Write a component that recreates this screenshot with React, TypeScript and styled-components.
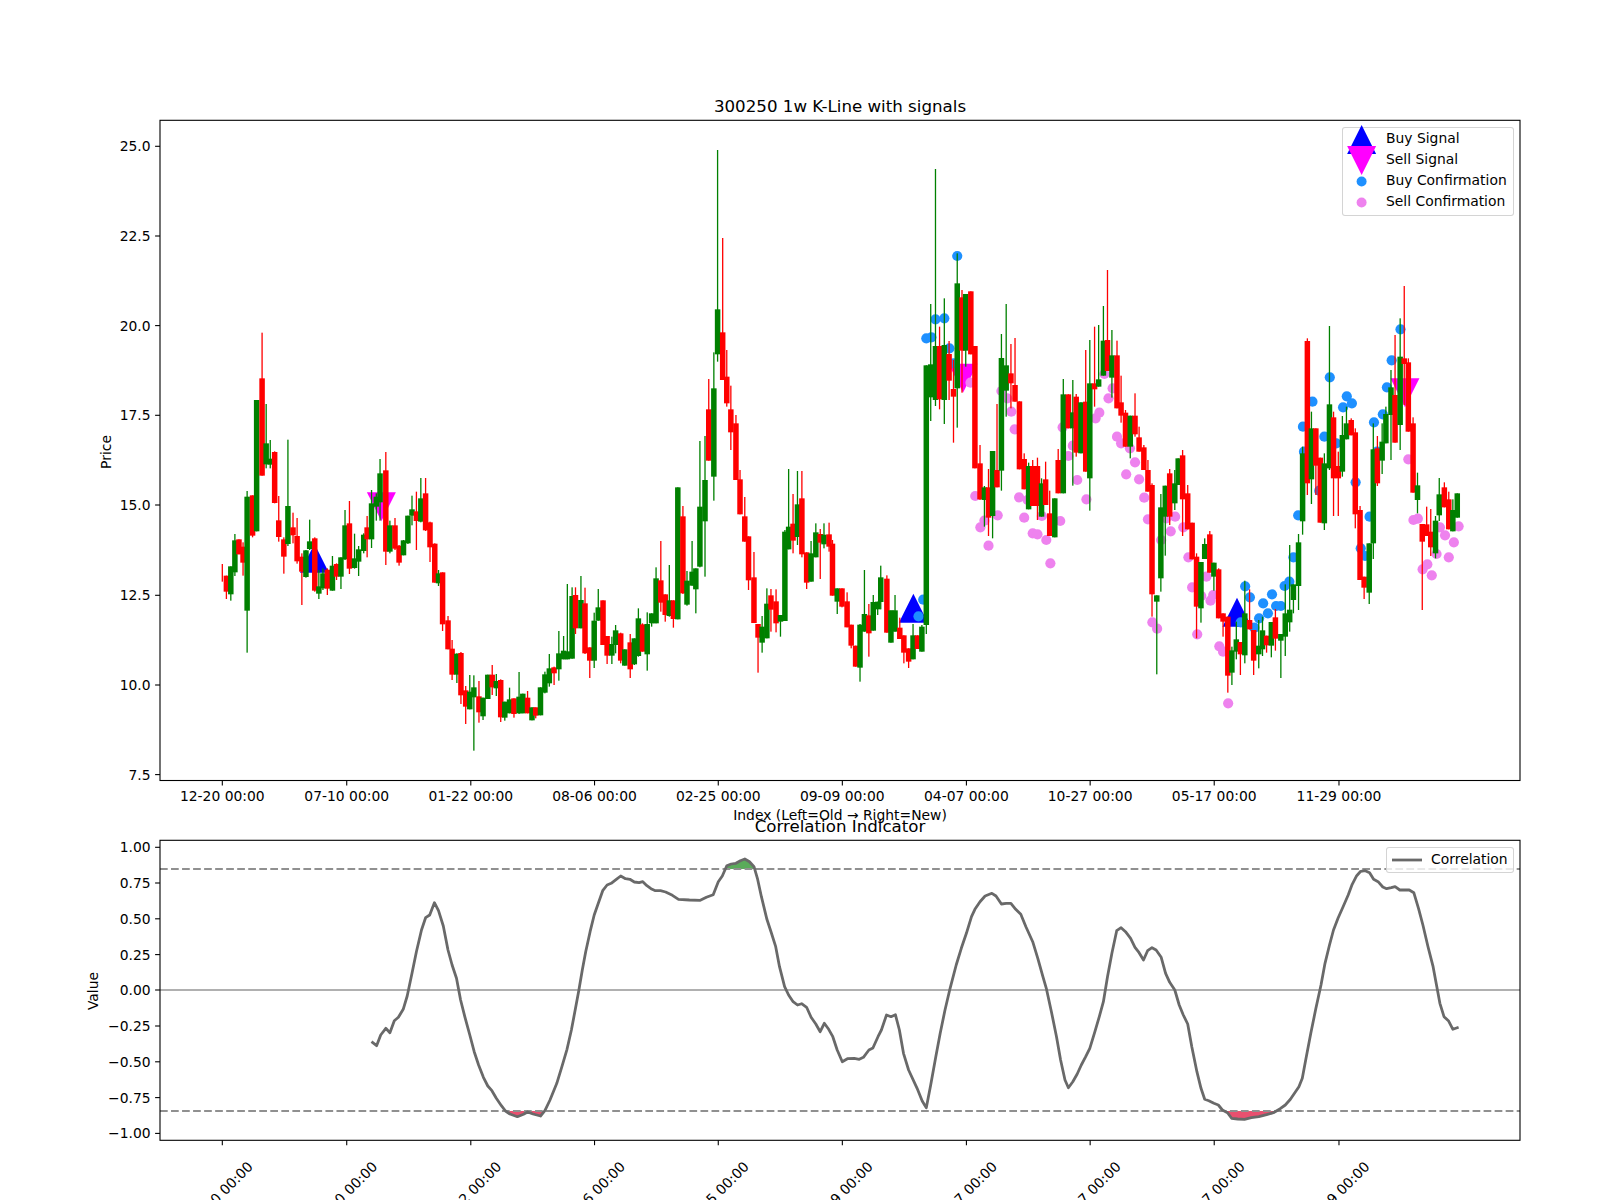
import React from 'react';
import styled, { createGlobalStyle } from 'styled-components';

const GlobalStyle = createGlobalStyle`
  html, body { margin: 0; padding: 0; background: #fff; }
  body { font-family: "DejaVu Sans", sans-serif; }
`;

const Figure = styled.main`
  display: flex;
  flex-direction: column;
  width: 1600px;
  height: 1200px;
  overflow: hidden;
  background: #fff;
`;
const Panel = styled.section<{ $h: number }>`
  position: relative;
  flex: none;
  width: 1600px;
  height: ${(p) => p.$h}px;
`;
const Plot = styled.svg`
  display: block;
  width: 1600px;
  height: 100%;
  overflow: visible;
`;
const TickLabel = styled.text`
  font-family: "DejaVu Sans", sans-serif;
  font-size: 13.89px;
  fill: #000;
`;
const AxisLabel = styled(TickLabel)`
  text-anchor: middle;
`;
const ChartTitle = styled.text`
  font-family: "DejaVu Sans", sans-serif;
  font-size: 16.67px;
  fill: #000;
  text-anchor: middle;
`;
const Legend = styled.div<{ $top: number; $left: number; $w: number; $pb: number }>`
  position: absolute;
  top: ${(p) => p.$top}px;
  left: ${(p) => p.$left}px;
  width: ${(p) => p.$w}px;
  box-sizing: border-box;
  padding: 0 0 ${(p) => p.$pb}px;
  display: flex;
  flex-direction: column;
  background: rgba(255, 255, 255, 0.8);
  border: 1px solid rgba(204, 204, 204, 0.85);
  border-radius: 3px;
  font-size: 13.89px;
  color: #000;
`;
const LegendRow = styled.div<{ $nudge: number }>`
  display: flex;
  align-items: center;
  height: 21px;
  white-space: nowrap;
  &:first-child { margin-top: ${(p) => p.$nudge}px; }
`;
const LegendKey = styled.svg<{ $w: number }>`
  flex: none;
  display: block;
  width: ${(p) => p.$w}px;
  height: 21px;
  overflow: visible;
`;

type C = [number, 'g' | 'r', number, number, number, number];
const a0: C[] = [
[654,'r',342,395,395,395],[666,'r',377,377,425,447],[679,'g',349,349,433,452],[691,'g',252,271,367,378],[703,'r',268,268,313,313],[715,'r',277,290,338,377],
[727,'g',123,140,482,608],[743,'r',136,136,257,262],[755,'g',-150,-150,244,244],[771,'r',-352,-215,77,77],[783,'g',-138,-20,43,55],[795,'g',-30,26,44,55],
[808,'r',4,6,159,160],[820,'r',138,211,261,275],[835,'r',262,268,320,371],[847,'g',-31,168,282,288],[862,'r',188,232,256,280],[874,'r',204,258,334,341],
[888,'r',310,320,365,465],[900,'g',300,301,381,383],[911,'g',209,274,297,300],[926,'r',262,265,422,425],[938,'g',360,409,431,447],[950,'g',355,370,415,420],
[963,'r',355,359,416,435],[978,'g',318,347,422,422],[990,'r',340,342,380,390],[1003,'g',322,322,380,417],[1015,'g',180,226,328,330],[1028,'r',153,220,356,372],
[1043,'g',251,325,354,356],[1055,'g',288,298,335,378],[1070,'g',250,254,303,310],[1080,'r',198,232,268,322],[1093,'g',120,160,268,294],[1107,'g',130,140,170,212],
[1118,'g',27,70,157,212],[1135,'r',6,61,305,345],[1147,'g',212,226,305,310],[1162,'r',204,226,296,300],[1174,'r',285,287,338,347],[1187,'g',270,271,316,316],
[1200,'g',197,197,280,282],[1212,'g',137,178,197,226],[1225,'r',125,184,213,300],[1238,'g',84,145,215,217],[1252,'r',84,130,241,243],[1265,'r',215,217,292,336],
[1279,'r',280,281,398,398],[1290,'g',360,370,400,408],[1302,'r',367,367,523,543],[1318,'r',498,511,598,598],[1330,'r',570,596,674,690],[1344,'g',610,611,674,699],
[1356,'r',606,609,736,762],[1370,'r',708,721,770,822],[1382,'g',675,725,778,778],[1394,'g',676,712,742,902],[1409,'r',693,739,787,818],[1421,'g',743,743,799,810],
[1435,'g',674,674,747,747],[1448,'r',645,674,712,735],[1460,'g',672,693,715,738],[1473,'r',688,690,802,816],[1485,'g',755,755,803,812],[1499,'g',713,748,790,790],
[1512,'r',745,745,792,803],[1527,'g',666,740,790,792],[1538,'g',731,731,790,790],[1552,'r',723,743,790,790],[1565,'g',772,772,811,811],
];
const a1raw: C[] = [
[8,'r',772,772,797,805],[22,'g',712,712,796,796],[35,'g',665,673,728,730],[48,'g',612,655,700,710],[62,'r',650,652,670,705],[76,'g',543,610,658,692],
[90,'g',558,602,628,628],[101,'g',402,604,628,628],[115,'g',412,438,626,626],[125,'r',412,435,535,552],[141,'g',378,450,535,535],[153,'r',413,460,610,612],
[167,'r',592,592,632,684],[180,'g',488,512,632,654],[192,'g',417,472,512,512],[206,'r',451,451,585,585],[218,'r',558,558,617,642],[232,'g',560,582,617,642],
[243,'g',525,541,585,610],[258,'r',548,550,632,640],[270,'g',598,598,647,647],[286,'r',552,577,658,684],[298,'g',565,565,643,645],[310,'g',475,505,618,620],
[322,'r',520,523,605,605],[336,'g',487,522,613,662],[349,'g',490,490,520,530],[362,'g',352,385,520,520],[376,'r',273,391,458,485],[389,'r',433,433,495,515],
[401,'g',345,451,498,500],[413,'r',451,451,507,533],[426,'g',112,112,508,508],[441,'r',168,199,430,432],[453,'g',363,392,464,467],[468,'g',273,365,407,407],
[479,'g',355,355,418,490],[491,'g',-27,170,350,352],[506,'g',-42,90,214,380],[517,'r',-213,-122,32,32],[532,'g',-293,-185,80,152],[543,'g',-900,-422,-287,-265],
[558,'r',-636,-353,-210,-210],[570,'r',-300,-220,-140,-130],[582,'r',-193,-122,-53,0],[597,'r',-105,-80,90,90],[609,'r',60,88,193,193],[623,'r',141,199,275,275],
[634,'r',259,259,391,420],[650,'r',306,382,519,519],[662,'r',522,522,563,668],[674,'g',498,530,578,608],[688,'g',415,461,565,565],[700,'r',417,436,479,545],
[715,'r',418,454,520,547],[728,'g',495,495,515,560],[741,'g',240,245,513,513],[752,'g',57,230,298,298],[765,'r',132,221,272,310],[778,'g',63,163,261,285],
[791,'r',63,145,313,322],[805,'r',307,307,398,417],[818,'g',273,310,395,395],[832,'g',220,247,322,322],[845,'r',237,252,278,387],[856,'g',220,254,283,295],
[871,'r',218,253,290,305],[881,'r',270,281,437,437],[895,'g',415,415,455,492],[909,'r',415,415,470,472],[924,'r',427,454,532,532],[936,'r',524,524,587,595],
[949,'r',587,587,650,650],[962,'g',522,524,653,695],[975,'g',360,492,545,545],[988,'r',462,496,550,620],[1001,'g',435,456,542,542],[1014,'g',455,455,478,495],
[1023,'g',347,382,456,478],[1041,'r',376,386,548,548],[1053,'g',481,481,578,578],[1065,'g',435,481,545,545],[1079,'r',503,533,567,567],[1091,'r',556,556,608,640],
[1105,'r',595,595,635,654],[1118,'g',522,556,628,628],[1131,'r',556,556,597,597],[1144,'g',525,530,605,605],[1157,'g',-254,-254,525,552],[1170,'g',-438,-257,-158,-87],
[1184,'g',-843,-312,-150,-132],[1196,'r',-370,-312,-152,-122],[1210,'g',-455,-315,-150,-78],[1224,'r',-327,-288,-208,-150],[1237,'r',-270,-183,-160,-22],[1248,'g',-590,-500,-185,-67],
[1262,'r',-480,-458,-298,-172],[1273,'g',-468,-468,-298,-250],[1288,'r',-476,-476,-287,-287],[1300,'r',-312,-312,55,55],[1315,'r',-15,40,148,150],[1328,'g',108,112,150,230],
[1340,'r',57,112,203,258],[1352,'g',3,3,198,265],[1365,'r',-138,60,112,112],[1378,'g',-348,-276,62,122],[1392,'g',-438,-254,-178,-100],[1406,'r',-318,-230,-200,-125],
[1418,'r',-336,-195,-145,-145],[1431,'r',-146,-146,58,58],[1445,'r',10,27,118,118],[1458,'g',38,48,178,178],[1470,'r',30,48,168,168],[1484,'r',23,48,168,210],
[1496,'g',85,100,200,200],[1508,'r',35,88,165,165],[1520,'r',122,190,258,258],[1535,'g',145,145,262,262],[1545,'r',-3,30,130,130],[1560,'g',-213,-167,130,130],
];
const a2raw: C[] = [
[7,'r',-167,-167,-65,-65],[20,'g',-210,-113,-65,107],[30,'r',-168,-160,8,20],[44,'g',-143,-143,10,10],[58,'r',-300,-145,65,65],[70,'g',-330,-200,85,182],
[84,'r',-370,-200,-182,-130],[96,'g',-375,-212,-190,-190],[110,'g',-432,-328,-223,-223],[122,'r',-540,-330,-237,-237],[135,'g',-360,-284,-217,-157],[150,'r',-328,-284,-125,-125],
[162,'r',-223,-143,-103,-82],[175,'r',-120,-112,-10,-10],[189,'g',-103,-103,-10,25],[203,'r',-170,-103,-47,-40],[215,'r',-70,-38,5,5],[229,'r',-15,-8,60,60],
[241,'r',30,60,125,125],[253,'r',100,105,433,500],[267,'g',436,436,455,673],[279,'g',132,172,385,425],[292,'g',107,107,200,317],[305,'r',57,70,200,225],
[320,'g',60,100,160,180],[330,'g',25,25,105,105],[343,'r',0,16,148,258],[358,'r',105,130,238,238],[371,'r',218,218,328,328],[384,'r',310,320,470,565],
[397,'g',336,336,475,518],[408,'g',265,282,327,327],[423,'r',243,253,368,368],[435,'g',338,338,380,422],[449,'r',355,358,505,505],[462,'r',490,490,515,560],
[476,'r',500,500,677,728],[488,'g',590,601,668,705],[501,'g',515,568,605,628],[513,'r',576,576,613,675],[526,'g',392,490,616,640],[540,'r',418,510,538,538],
[552,'r',540,540,632,675],[567,'g',510,587,613,655],[578,'g',500,541,598,618],[590,'r',557,557,586,608],[604,'g',516,516,587,622],[616,'r',477,502,566,602],
[632,'g',552,552,572,684],[645,'g',403,490,560,618],[658,'g',285,479,517,545],[669,'g',403,403,450,490],[684,'g',252,277,408,480],[696,'g',-10,10,214,254],
[710,'r',-335,-327,100,135],[722,'g',-115,-65,88,162],[735,'r',-65,-65,47,135],[748,'r',23,23,218,218],[760,'g',10,40,220,240],[775,'g',-372,-137,55,60],
[787,'r',-115,-98,85,198],[801,'r',5,48,85,198],[813,'g',-102,-45,65,80],[825,'g',-130,-80,-32,-32],[839,'r',-95,-90,-44,-44],[851,'r',-65,-53,193,235],
[865,'r',168,180,390,390],[877,'r',380,380,413,447],[892,'g',280,280,428,462],[904,'g',-80,-2,280,327],[916,'r',-42,-5,100,108],[930,'g',-80,-25,32,72],
[941,'g',-130,-108,-20,-20],[956,'g',-240,-188,-105,30],[968,'r',-345,-165,-22,-22],[983,'g',-395,-280,-75,0],[995,'r',-492,-275,-258,-135],[1007,'r',-275,-263,-55,-55],
[1021,'r',-98,-80,128,128],[1034,'g',68,106,150,190],[1048,'r',222,222,275,480],[1061,'r',170,223,258,258],[1073,'r',177,245,292,318],[1087,'g',198,212,310,325],
[1098,'g',84,133,196,213],[1113,'r',97,112,172,172],[1126,'r',125,148,238,238],[1138,'g',148,180,244,244],[1151,'g',130,130,203,203],
];
const shift = (rows: C[], dx: number): C[] => rows.map((r) => [r[0] + dx, r[1], r[2], r[3], r[4], r[5]] as C);
const candles: C[] = [...a0, ...shift(a1raw, 1568), ...shift(a2raw, 3136)];

const S1 = 1568, S2 = 3136;
const blue: [number, number][] = [
[S1+1157,-335],[S1+1172,-338],[S1+1184,-392],[S1+1210,-395],[S1+1225,-305],[S1+1248,-582],[S1+1237,-260],[S1+1148,449],[S1+1134,499],
[S2+697,-70],[S2+725,-145],[S2+776,-218],[S2+826,-161],[S2+815,-128],[S2+841,-140],[S2+760,-40],[S2+795,-20],[S2+745,122],[S2+852,97],[S2+906,-83],[S2+932,-107],[S2+944,-188],[S2+958,-269],[S2+984,-362],[S2+915,5],[S2+700,5],
[S2+527,409],[S2+541,442],[S2+606,433],[S2+580,460],[S2+618,468],[S2+632,468],[S2+594,490],[S2+568,505],[S2+643,408],[S2+657,395],[S2+669,322],[S2+683,196],[S2+514,517],[S2+554,533],[S2+867,295],[S2+880,318],[S2+893,200],
];
const violet: [number, number][] = [
[S1+1287,-202],[S1+1378,-177],[S1+1395,-155],[S1+1407,-115],[S1+1417,-62],[S1+1558,-68],
[S1+1301,138],[S1+1328,212],[S1+1316,232],[S1+1340,287],[S1+1430,142],[S1+1455,150],[S1+1367,196],[S1+1445,203],[S1+1470,250],[S1+1484,253],[S1+1497,198],[S1+1510,270],[S1+1522,340],[S1+1551,213],
[S2+7,18],[S2+20,-13],[S2+33,90],[S2+60,148],[S2+87,-95],[S2+98,-112],[S2+113,-228],[S2+125,-155],[S2+137,-185],[S2+150,-40],[S2+162,-20],[S2+188,-5],[S2+203,37],[S2+177,73],[S2+215,88],[S2+230,143],[S2+241,208],[S2+321,200],[S2+295,205],[S2+308,244],[S2+345,232],[S2+280,270],[S2+360,322],[S2+413,380],[S2+371,412],[S2+398,438],[S2+433,435],[S2+425,452],[S2+254,517],[S2+268,536],[S2+386,553],[S2+451,589],[S2+462,605],[S2+477,760],[S2+1007,28],[S2+1022,210],[S2+1035,206],[S2+1100,232],[S2+1155,229],[S2+1115,256],[S2+1141,277],[S2+1090,312],[S2+1126,322],[S2+1049,358],[S2+1063,343],[S2+1076,376],
];

const corrA = [1093,665,1108,677,1120,645,1135,625,1147,638,1160,602,1172,592,1186,568,1198,528,1212,460,1225,395,1240,330,1252,293,1264,285,1278,248,1290,272,1304,318,1318,390,1330,435,1343,475,1355,540,1368,592,1382,645,1395,695,1408,735,1422,772,1435,798,1447,812,1460,835,1475,857,1487,873,1500,882,1522,890,1540,883,1552,876];
const corrB = [0,882,22,888,35,872,50,840,70,790,85,740,100,688,113,630,125,565,135,510,145,450,155,395,168,335,180,285,192,250,205,212,218,195,230,190,245,178,258,168,272,176,285,178,298,186,312,188,323,185,335,197,347,206,360,212,375,212,390,216,410,226,428,238,460,240,492,241,510,232,530,224,545,185,557,168,570,137,583,132,597,130,610,122,623,117,637,125,650,140,660,175,672,230,688,298,700,335,714,380,725,440,740,500,752,525,765,545,778,555,790,551,805,562,818,592,832,612,845,635,857,610,870,628,882,650,895,690,910,725,925,716,945,715,960,718,972,712,988,690,1000,684,1015,650,1025,630,1040,585,1053,590,1066,584,1078,630,1090,700,1105,750,1130,805,1145,843,1157,863,1170,795,1185,710,1198,640,1212,570,1227,505,1245,435,1260,385,1275,340,1290,290,1300,268,1315,245,1330,228,1350,220,1362,228,1378,252,1392,250,1406,250,1420,268,1435,283,1450,320,1470,365,1485,415,1500,470,1510,505,1525,575,1540,650,1552,720];
const corrC = [-3,780,7,803,20,785,33,762,45,735,58,710,70,685,85,635,98,590,110,545,122,470,135,400,149,332,162,323,175,335,190,355,203,382,215,398,228,420,240,392,253,383,265,390,280,412,293,460,305,487,320,510,333,555,345,585,358,612,370,680,385,755,397,805,408,838,420,842,435,850,448,855,460,870,475,878,487,895,505,897,525,898,545,893,567,890,590,884,610,878,630,866,645,855,660,838,675,815,685,800,695,775,705,720,720,640,735,565,750,495,762,430,775,375,787,330,800,295,815,260,830,225,842,193,855,167,867,154,880,152,893,158,905,178,918,185,932,201,943,206,957,203,968,200,982,210,995,210,1010,210,1023,218,1037,265,1050,315,1065,380,1080,440,1090,495,1100,550,1112,590,1125,602,1138,628,1155,622];

const px = (X: number) => X / 2.9418;
const my = (z: number) => 450 + z / 3;
const ly = (z: number) => 820 + z / 3;

const toPts = (arr: number[], dx: number) => {
  const out: string[] = [];
  for (let i = 0; i < arr.length; i += 2) out.push(`${px(arr[i] + dx).toFixed(1)},${ly(arr[i + 1]).toFixed(1)}`);
  return out;
};
const corrPoints = [...toPts(corrA, 0), ...toPts(corrB, S1), ...toPts(corrC, S2)].join(' ');
const poly = (pts: number[][]) => pts.map(([X, z]) => `${px(X).toFixed(1)},${ly(z).toFixed(1)}`).join(' ');

const greenFill = poly([[S1+565,147],[S1+570,137],[S1+583,132],[S1+597,130],[S1+610,122],[S1+623,117],[S1+637,125],[S1+650,140],[S1+653,147]]);
const redFill1 = poly([[1487,873],[1500,882],[1522,890],[1540,883],[1552,876],[S1,882],[S1+22,888],[S1+35,873]]);
const redFill2 = poly([[S2+470,873],[S2+475,878],[S2+487,895],[S2+505,897],[S2+525,898],[S2+545,893],[S2+567,890],[S2+590,884],[S2+610,878],[S2+618,873]]);

const xTicks = [654,1020,1385,1749,2113,2478,2843,3207,3572,3939].map(px);
const xNames = ['12-20 00:00','07-10 00:00','01-22 00:00','08-06 00:00','02-25 00:00','09-09 00:00','04-07 00:00','10-27 00:00','05-17 00:00','11-29 00:00'];
const mainY: [number, string][] = [[146.3,'25.0'],[236,'22.5'],[325.6,'20.0'],[415.3,'17.5'],[505,'15.0'],[595.3,'12.5'],[685,'10.0'],[774.6,'7.5']];
const lowY: [number, string][] = [[847.3,'1.00'],[883,'0.75'],[918.8,'0.50'],[954.6,'0.25'],[990,'0.00'],[1026,'\u22120.25'],[1061.8,'\u22120.50'],[1097.6,'\u22120.75'],[1133.4,'\u22121.00']];

const L = 160, R = 1520;
const up = (cx: number, cy: number) => `${cx},${cy - 14.5} ${cx + 14.5},${cy + 14.5} ${cx - 14.5},${cy + 14.5}`;
const down = (cx: number, cy: number) => `${cx - 14.5},${cy - 14.5} ${cx + 14.5},${cy - 14.5} ${cx},${cy + 14.5}`;

const Frame = ({ top, bottom }: { top: number; bottom: number }) => (
  <rect x={L} y={top} width={R - L} height={bottom - top} fill="none" stroke="#000" strokeWidth={1.1} />
);
const YAxis = ({ ticks }: { ticks: [number, string][] }) => (
  <>
    {ticks.map(([y, t]) => (
      <g key={t}>
        <line x1={L - 4.9} x2={L} y1={y} y2={y} stroke="#000" strokeWidth={1.1} />
        <TickLabel x={L - 9.4} y={y + 5} textAnchor="end">{t}</TickLabel>
      </g>
    ))}
  </>
);

export default function App() {
  return (
    <Figure>
      <GlobalStyle />
      <Panel $h={800}>
        <Plot viewBox="0 0 1600 800">
          <polygon points={up(px(925), my(325))} fill="#0000ff" />
          <polygon points={up(px(S1 + 1119), my(475))} fill="#0000ff" />
          <polygon points={up(px(S2 + 503), my(487))} fill="#0000ff" />
          <polygon points={down(px(1122), my(170))} fill="#ff00ff" />
          <polygon points={down(px(S1 + 1265), my(-215))} fill="#ff00ff" />
          <polygon points={down(px(S2 + 997), my(-172))} fill="#ff00ff" />
          {violet.map(([X, z], i) => <circle key={i} cx={px(X)} cy={my(z)} r={5.1} fill="#ee82ee" />)}
          {blue.map(([X, z], i) => <circle key={i} cx={px(X)} cy={my(z)} r={5.1} fill="#1e90ff" />)}
          {candles.map(([X, c, wt, bt, bb, wb], i) => {
            const col = c === 'g' ? '#008000' : '#ff0000';
            const x = px(X);
            return (
              <g key={i} fill={col}>
                <rect x={x - 0.65} y={my(wt)} width={1.3} height={Math.max(0, my(wb) - my(wt))} />
                {bb > bt && <rect x={x - 2.75} y={my(bt)} width={5.5} height={my(bb) - my(bt)} />}
              </g>
            );
          })}
          <Frame top={120.3} bottom={780.5} />
          <YAxis ticks={mainY} />
          {xTicks.map((x, i) => (
            <g key={i}>
              <line x1={x} x2={x} y1={780.5} y2={785.4} stroke="#000" strokeWidth={1.1} />
              <TickLabel x={x} y={801} textAnchor="middle">{xNames[i]}</TickLabel>
            </g>
          ))}
          <ChartTitle x={840} y={112}>300250 1w K-Line with signals</ChartTitle>
          <AxisLabel x={840} y={820}>{'Index (Left=Old \u2192 Right=New)'}</AxisLabel>
          <AxisLabel transform="translate(111 452) rotate(-90)">Price</AxisLabel>
        </Plot>
        <Legend $top={127.3} $left={1342} $w={171.5} $pb={4}>
          <LegendRow $nudge={-1}>
            <LegendKey $w={43} viewBox="0 0 43 21"><polygon points={up(18.6, 12.5)} fill="#0000ff" /></LegendKey>
            Buy Signal
          </LegendRow>
          <LegendRow $nudge={0}>
            <LegendKey $w={43} viewBox="0 0 43 21"><polygon points={down(18.6, 12.5)} fill="#ff00ff" /></LegendKey>
            Sell Signal
          </LegendRow>
          <LegendRow $nudge={0}>
            <LegendKey $w={43} viewBox="0 0 43 21"><circle cx={18.6} cy={12.5} r={5} fill="#1e90ff" /></LegendKey>
            Buy Confirmation
          </LegendRow>
          <LegendRow $nudge={0}>
            <LegendKey $w={43} viewBox="0 0 43 21"><circle cx={18.6} cy={12.5} r={5} fill="#ee82ee" /></LegendKey>
            Sell Confirmation
          </LegendRow>
        </Legend>
      </Panel>
      <Panel $h={400}>
        <Plot viewBox="0 800 1600 400">
          <polygon points={greenFill} fill="#5aab5a" />
          <polygon points={redFill1} fill="#e8506f" />
          <polygon points={redFill2} fill="#e8506f" />
          <line x1={L} x2={R} y1={990} y2={990} stroke="#b0b0b0" strokeWidth={2.08} />
          <line x1={L} x2={R} y1={869} y2={869} stroke="#909090" strokeWidth={2.08} strokeDasharray="7.7 3.33" />
          <line x1={L} x2={R} y1={1111} y2={1111} stroke="#909090" strokeWidth={2.08} strokeDasharray="7.7 3.33" />
          <polyline points={corrPoints} fill="none" stroke="#696969" strokeWidth={2.78} strokeLinejoin="round" />
          <Frame top={840.3} bottom={1140.3} />
          <YAxis ticks={lowY} />
          {xTicks.map((x, i) => (
            <g key={i}>
              <line x1={x} x2={x} y1={1140.3} y2={1145.2} stroke="#000" strokeWidth={1.1} />
              <TickLabel x={x} y={1199} textAnchor="middle" transform={`translate(-2 0) rotate(-45 ${x} 1194)`}>{xNames[i]}</TickLabel>
            </g>
          ))}
          <ChartTitle x={840} y={832}>Correlation Indicator</ChartTitle>
          <AxisLabel transform="translate(98 991) rotate(-90)">Value</AxisLabel>
        </Plot>
        <Legend $top={47.3} $left={1385.5} $w={128} $pb={3}>
          <LegendRow $nudge={0}>
            <LegendKey $w={44.6} viewBox="0 0 44.6 21"><line x1={5} x2={35} y1={12} y2={12} stroke="#696969" strokeWidth={2.78} /></LegendKey>
            Correlation
          </LegendRow>
        </Legend>
      </Panel>
    </Figure>
  );
}
